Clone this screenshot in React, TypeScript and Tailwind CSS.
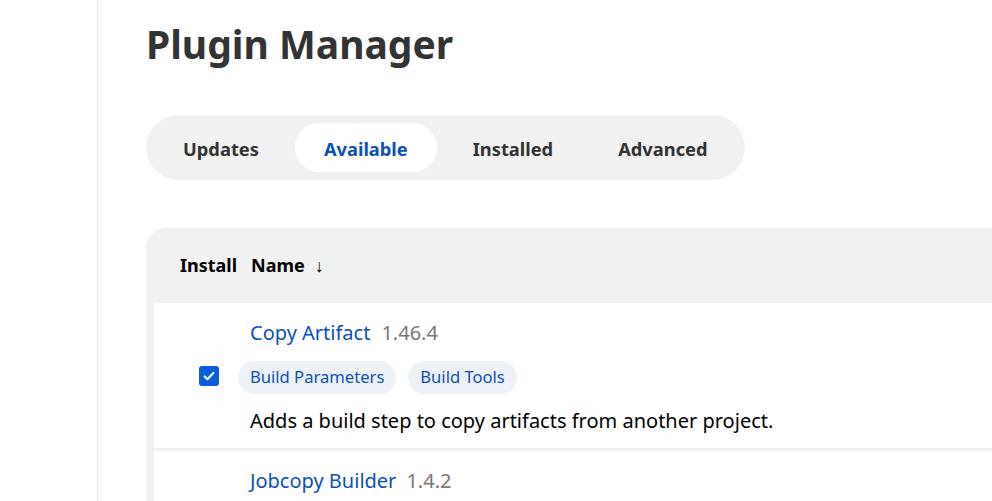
import React from 'react';

const tabs = ['Updates', 'Available', 'Installed', 'Advanced'];

function Tag({ text }: { text: string }) {
  return (
    <span className="h-[33px] px-3 flex items-center rounded-full bg-[#eef2f8] text-[#0b50b9] text-[16.6px]">
      {text}
    </span>
  );
}

export default function App() {
  return (
    <div className="w-[992px] h-[501px] overflow-hidden bg-white flex" style={{ fontFamily: '"Noto Sans", sans-serif' }}>
      <div className="w-[98px] shrink-0 border-r border-[#ececec]" />
      <div className="flex-1 pl-[48px] pt-[14px]">
        <h1 className="text-[39px] font-bold text-[#333] leading-[60px]">Plugin Manager</h1>

        <div className="mt-[41px] inline-flex items-center gap-[7px] h-[65px] px-2 rounded-full bg-[#f1f1f1]">
          {tabs.map((t) => (
            <button
              key={t}
              className={
                'h-[49px] px-[29px] pt-[2px] rounded-full text-[18.3px] font-bold ' +
                (t === 'Available' ? 'bg-white text-[#0b50b9]' : 'text-[#333]')
              }
            >
              {t}
            </button>
          ))}
        </div>

        <div className="mt-[48px] rounded-tl-[20px] bg-[#f1f1f1] pl-[8px]">
          <div className="h-[75px] flex items-center text-[18px] font-bold text-black">
            <span className="ml-[26px]">Install</span>
            <span className="ml-[14px]">Name</span>
            <span className="ml-[10px] font-normal">↓</span>
          </div>
          <div className="bg-white flex h-[145px]">
            <div className="w-[84px] shrink-0 flex items-center justify-center pl-[26px]">
              <span className="w-[20px] h-[20px] shrink-0 rounded-[3px] bg-[#0b5ed7] flex items-center justify-center">
                <svg width="14" height="14" viewBox="0 0 16 16" fill="none">
                  <path d="M3 8.5l3.2 3.2L13 4.5" stroke="white" strokeWidth="2.4" strokeLinecap="round" strokeLinejoin="round" />
                </svg>
              </span>
            </div>
            <div className="flex flex-col pt-[16px]">
              <div className="ml-[12px] text-[20px] leading-[28px]">
                <span className="text-[#0b50b9]">Copy Artifact</span>
                <span className="ml-[11px] text-[#777]">1.46.4</span>
              </div>
              <div className="mt-[14px] flex gap-[12px]">
                <Tag text="Build Parameters" />
                <Tag text="Build Tools" />
              </div>
              <div className="ml-[12px] mt-[12px] text-[20px] text-black">
                Adds a build step to copy artifacts from another project.
              </div>
            </div>
          </div>
          <div className="h-[3px]" />
          <div className="bg-white h-[60px] pt-[16px] pl-[96px] text-[20px] leading-[28px]">
            <span className="text-[#0b50b9]">Jobcopy Builder</span>
            <span className="ml-[10px] text-[#777]">1.4.2</span>
          </div>
        </div>
      </div>
    </div>
  );
}
